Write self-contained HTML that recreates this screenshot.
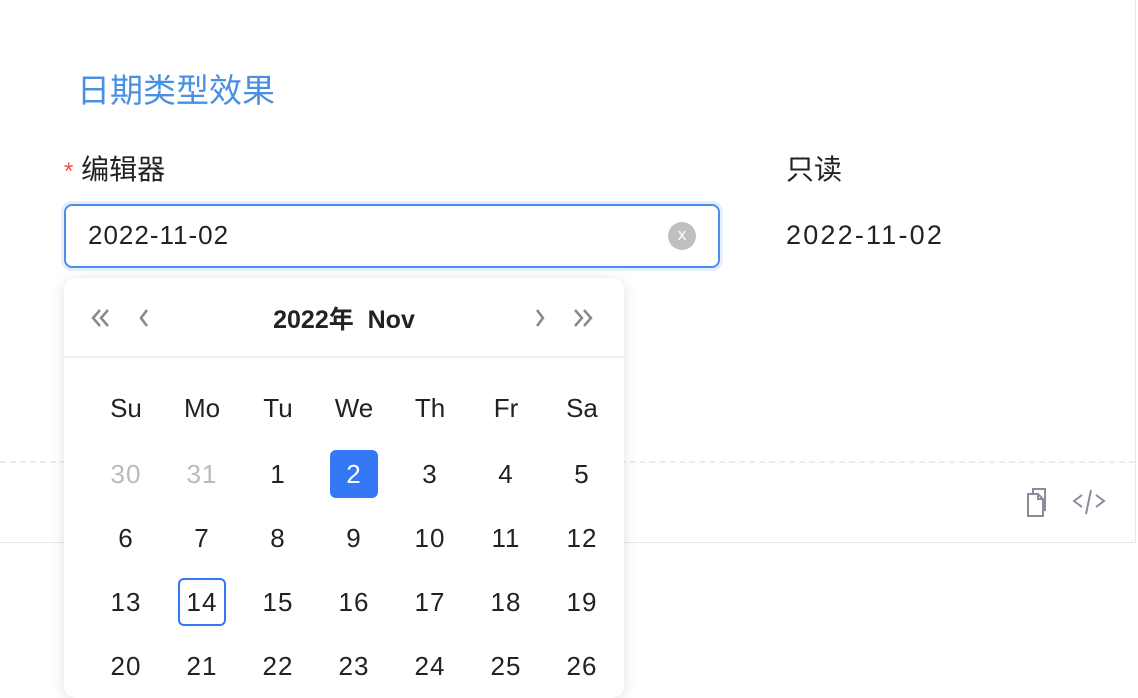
<!DOCTYPE html>
<html><head><meta charset="utf-8"><style>
body{margin:0;width:1138px;height:668px;overflow:hidden;background:#fff;font-family:"Liberation Sans","Noto Sans CJK SC",sans-serif;position:relative}
.abs{position:absolute}
.card{left:-2px;top:-2px;width:1136px;height:544px;border:1px solid #e8e8ec;border-top:none}
.dash{left:0;top:461px;width:1135px;border-top:2px dashed #ececf0}
.title{left:77px;top:64px;font-size:33px;color:#4a90e2}
.lbl{top:148px;font-size:28px;color:#222}
.inp{left:64px;top:204px;width:652px;height:60px;border:2px solid #4a8ef0;border-radius:8px;box-shadow:0 0 0 3px #e6effc}
.inp span{position:absolute;left:22px;top:14px;font-size:26px;color:#222;letter-spacing:1px}
.clr{left:668px;top:222px;width:28px;height:28px;border-radius:50%;background:#bfbfbf;color:#fff;font-size:17px;text-align:center;line-height:26px}
.ro{left:786px;top:220px;font-size:27px;color:#222;letter-spacing:2.2px}
.pop{left:64px;top:278px;width:560px;height:420px;background:#fff;border-radius:12px;box-shadow:0 2px 14px rgba(0,0,0,.12)}
.hd{position:absolute;left:0;top:0;width:560px;height:78px;border-bottom:2px solid #eeeeee}
.c{position:absolute;width:76px;text-align:center;font-size:26px;color:#222}
.sel{position:absolute;width:48px;height:48px;border-radius:6px}
</style></head><body>
<div class="abs card"></div>
<div class="abs dash"></div>
<div class="abs title">日期类型效果</div>
<div class="abs lbl" style="left:64px"><span style="color:#f0504a;font-size:24px">*</span> 编辑器</div>
<div class="abs lbl" style="left:786px">只读</div>
<div class="abs inp"><span>2022-11-02</span></div>
<div class="abs clr">x</div>
<div class="abs ro">2022-11-02</div>
<svg class="abs" style="left:1026px;top:486px" width="28" height="32" viewBox="0 0 28 32" fill="none" stroke="#8a8d99" stroke-width="2"><path d="M7 8V3h12v21h-2"/><path d="M2 8h10l5 5v17H2z"/><path d="M12 8v5h5"/></svg>
<svg class="abs" style="left:1072px;top:488px" width="34" height="28" viewBox="0 0 34 28" fill="none" stroke="#8a8d99" stroke-width="2"><path d="M10 7L2 13l8 6M24 7l8 6-8 6M19 2l-5 24"/></svg>
<div class="abs pop">
<div class="hd">
<svg style="position:absolute;left:26px;top:28px" width="70" height="24" viewBox="0 0 70 24" fill="none" stroke="#888" stroke-width="2.5"><path d="M10 4l-7 8 7 8M18 4l-7 8 7 8M57 4l-6 8 6 8"/></svg>
<div style="position:absolute;left:0;width:560px;top:22px;text-align:center;font-size:25px;font-weight:bold;color:#222">2022年&nbsp; Nov</div>
<svg style="position:absolute;left:470px;top:28px" width="70" height="24" viewBox="0 0 70 24" fill="none" stroke="#888" stroke-width="2.5"><path d="M3 4l6 8-6 8M41 4l7 8-7 8M50 4l7 8-7 8"/></svg>
</div>
<div class="sel" style="left:266px;top:172px;background:#3478f6"></div>
<div class="sel" style="left:114px;top:300px;border:2px solid #3478f6;width:44px;height:44px"></div>
<div id="g"></div>
</div>
<script>
var g=document.getElementById('g'),h='';
var wd=['Su','Mo','Tu','We','Th','Fr','Sa'];
wd.forEach(function(d,i){h+='<div class="c" style="left:'+(24+i*76)+'px;top:115px">'+d+'</div>';});
var rows=[[30,31,1,2,3,4,5],[6,7,8,9,10,11,12],[13,14,15,16,17,18,19],[20,21,22,23,24,25,26]];
rows.forEach(function(r,ri){r.forEach(function(n,i){var col=(ri==0&&i<2)?'#bbb':(ri==0&&i==3)?'#fff':'#222';h+='<div class="c" style="left:'+(24+i*76)+'px;top:'+(181+ri*64)+'px;color:'+col+';letter-spacing:1px">'+n+'</div>';});});
g.innerHTML=h;
</script>
</body></html>
